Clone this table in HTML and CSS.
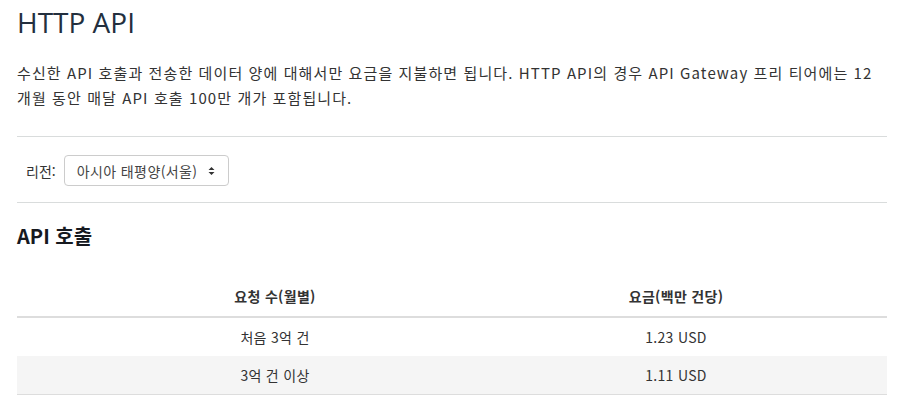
FILE: index.html
```html
<!DOCTYPE html>
<html lang="ko">
<head>
    <meta charset="UTF-8">
    <title>HTTP API 요금</title>
    <link rel="stylesheet" href="styles.css">
</head>
<body>
    <div class="container">
        <h1>HTTP API</h1>
        <p class="intro">수신한 API 호출과 전송한 데이터 양에 대해서만 요금을 지불하면 됩니다. HTTP API의 경우 API Gateway 프리 티어에는 12 개월 동안 매달 API 호출 100만 개가 포함됩니다.</p>
        <hr>
        <div class="region-row">
            <label for="region">리전:</label>
            <div class="select" id="region">
                <span>아시아 태평양(서울)</span>
                <svg class="select-arrow" width="7" height="10" viewBox="0 0 7 10">
                    <path d="M3.5 1 L6.5 4 L0.5 4 Z M3.5 9 L6.5 6 L0.5 6 Z" fill="#333"/>
                </svg>
            </div>
        </div>
        <hr>
        <h2>API 호출</h2>
        <table class="price-table">
            <colgroup>
                <col class="col-count">
                <col class="col-price">
            </colgroup>
            <thead>
                <tr>
                    <th>요청 수(월별)</th>
                    <th class="price">요금(백만 건당)</th>
                </tr>
            </thead>
            <tbody>
                <tr>
                    <td>처음 3억 건</td>
                    <td class="price">1.23 USD</td>
                </tr>
                <tr class="striped">
                    <td>3억 건 이상</td>
                    <td class="price">1.11 USD</td>
                </tr>
            </tbody>
        </table>
    </div>
</body>
</html>
```

FILE: styles.css
```css
body {
    font-family: "Noto Sans CJK KR", "Open Sans", sans-serif;
    background-color: white;
    color: #333;
    margin: 0;
    padding: 0;
    word-break: keep-all;
}

.container {
    padding: 0 10px 0 17px;
}

h1 {
    font-family: "Open Sans", "Noto Sans CJK KR", sans-serif;
    font-size: 28px;
    font-weight: 400;
    color: #232f3e;
    margin: 0;
    padding-top: 5px;
    line-height: 34px;
}

.intro {
    font-size: 15px;
    line-height: 25px;
    letter-spacing: 1.1px;
    margin: 21px 0 0 0;
}

hr {
    border: none;
    border-top: 1px solid #d9dcdc;
    margin: 0;
}

.intro + hr {
    margin-top: 26px;
}

.region-row {
    display: flex;
    align-items: center;
    gap: 8px;
    padding: 18px 0 16px 9px;
    font-size: 14px;
}

.select {
    display: flex;
    align-items: center;
    gap: 10px;
    height: 31px;
    box-sizing: border-box;
    padding: 0 13px 0 12px;
    border: 1px solid #ccc;
    border-radius: 4px;
    color: #444;
    letter-spacing: 0.4px;
}

h2 {
    font-size: 20px;
    font-weight: 700;
    color: #16191f;
    margin: 0;
    padding: 19px 0 0 0;
    line-height: 28px;
}

.price-table {
    width: 100%;
    border-collapse: collapse;
    margin-top: 26px;
    font-size: 14px;
    letter-spacing: 0.3px;
    color: #333;
}

.col-count {
    width: 516px;
}

.price-table th,
.price-table td {
    text-align: center;
    padding: 0;
    height: 38px;
}

.price-table th {
    font-weight: 700;
    height: 40px;
    border-bottom: 2px solid #ddd;
}

.price-table .price {
    padding-right: 68px;
}

.price-table td {
    border-bottom: 1px solid #ddd;
}

.price-table tbody tr:first-child td {
    border-bottom: none;
}

.striped td {
    background-color: #f5f5f5;
}
```
